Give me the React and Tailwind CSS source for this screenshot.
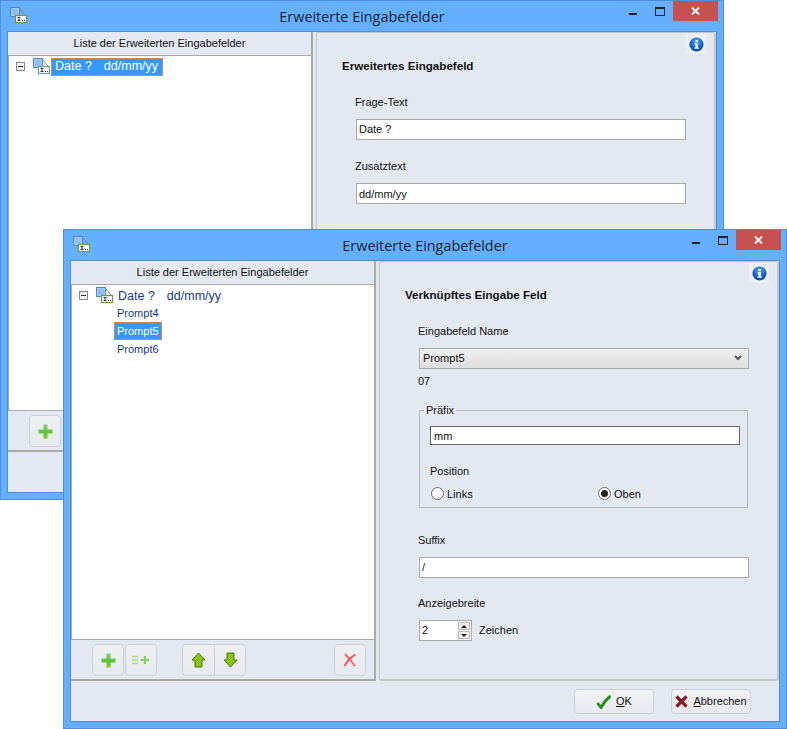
import React from 'react'

function TreeIcon({ edge = '#6f9a3c', className = '' }) {
  return (
    <svg width="17" height="17" viewBox="0 0 17 17" className={className}>
      <rect x="0.5" y="0.5" width="9" height="9" fill="#a5cdf3" stroke="#4f86cc" />
      <rect x="2" y="2" width="6" height="6" fill="#8fc0ee" />
      <path d="M10 2l5 6" stroke="#7d828c" strokeWidth="1" />
      <rect x="5.5" y="8.5" width="11" height="7" fill="#fff" stroke={edge} strokeWidth="1.2" />
      <path d="M7.5 10.5h3M9 10.5v3M7.5 13.5h3M12 13.5h1M14 13.5h1" stroke="#333" strokeWidth="1" />
    </svg>
  )
}

function InfoIcon() {
  return (
    <div className="flex h-5 w-5 items-center justify-center bg-[#eeeff2]">
      <svg width="15" height="15" viewBox="0 0 15 15">
        <defs>
          <radialGradient id="infoBall" cx="50%" cy="30%" r="75%">
            <stop offset="0%" stopColor="#5aa6ef" />
            <stop offset="60%" stopColor="#0f62cc" />
            <stop offset="100%" stopColor="#0a3f96" />
          </radialGradient>
        </defs>
        <circle cx="7.5" cy="7.5" r="7" fill="url(#infoBall)" />
        <rect x="6.5" y="3" width="2.4" height="2" fill="#fff" />
        <path d="M5.5 6.2h3.4v4.4h1v1.2H5.5v-1.2h1V7.4h-1z" fill="#fff" />
      </svg>
    </div>
  )
}

function PlusIcon() {
  return (
    <svg width="15" height="15" viewBox="0 0 15 15">
      <defs>
        <linearGradient id="plusFill" x1="0" y1="0" x2="0" y2="1">
          <stop offset="0%" stopColor="#7fd06a" />
          <stop offset="60%" stopColor="#5fbe3a" />
          <stop offset="100%" stopColor="#78d010" />
        </linearGradient>
      </defs>
      <path d="M5.5 0.5h4v5h5v4h-5v5h-4v-5h-5v-4h5z" fill="url(#plusFill)" />
    </svg>
  )
}

function ListPlusIcon() {
  return (
    <svg width="18" height="10" viewBox="0 0 18 10">
      <path d="M0 1.5h6M0 5h6M0 8.5h6" stroke="#a8dc78" strokeWidth="1.6" />
      <path d="M9 5h8M13 1v8" stroke="#86d060" strokeWidth="2.2" />
    </svg>
  )
}

function ArrowIcon({ down = false }) {
  return (
    <svg width="15" height="16" viewBox="0 0 15 16" className={down ? 'rotate-180' : ''}>
      <path d="M7.5 1L14 8h-3v7H4V8H1z" fill="#8cc40c" stroke="#3f7d08" strokeWidth="1" />
    </svg>
  )
}

function DeleteIcon() {
  return (
    <svg width="14" height="14" viewBox="0 0 14 14">
      <path d="M2 1c3 3 6 7 10 12" stroke="#f2636b" strokeWidth="2" fill="none" />
      <path d="M12.5 1.5C8 4 4 8 1.5 13" stroke="#f4545c" strokeWidth="2" fill="none" />
    </svg>
  )
}

function CheckIcon() {
  return (
    <svg width="15" height="14" viewBox="0 0 15 14">
      <path d="M1.5 8l3.5 4.5C7.5 8 10.5 4 14.5 1" stroke="#1c8c1c" strokeWidth="2.8" fill="none" />
    </svg>
  )
}

function CancelIcon() {
  return (
    <svg width="13" height="13" viewBox="0 0 13 13">
      <path d="M1.5 1.5l10 10M11.5 1.5l-10 10" stroke="#8c1c24" strokeWidth="3.2" />
    </svg>
  )
}

function ToolButton({ children, className = '' }) {
  return (
    <div className={`flex h-[32px] w-[32px] items-center justify-center rounded-[4px] border border-[#ccd0d6] bg-gradient-to-b from-[#eef0f3] to-[#e6e9ee] ${className}`}>
      {children}
    </div>
  )
}

function Field({ value, className = '' }) {
  return (
    <input
      readOnly
      value={value}
      className={`block h-[21px] w-[330px] border border-[#a9abb0] bg-white px-[2px] text-[11px] text-[#111] outline-none ${className}`}
    />
  )
}

function Window({ className = '', tree, tools, form, footer }) {
  return (
    <div className={`absolute flex h-[500px] w-[724px] flex-col border border-[#4f8fd3] bg-[#64b0fe] ${className}`}>
      {/* Title bar */}
      <div className="grid h-[30px] shrink-0 grid-cols-[1fr_auto_1fr] items-start">
        <TreeIcon className="ml-[9px] mt-[6px]" />
        <div className="pt-[6px] text-center font-['Open_Sans',sans-serif] text-[14.4px] leading-[20px] text-[#1c2430]">
          Erweiterte Eingabefelder
        </div>
        <div className="mr-[5px] flex items-start justify-end">
          <div className="mr-[18px] mt-[12px] h-[2px] w-[8px] bg-[#1c2430]" />
          <div className="mr-[8px] mt-[6px] h-[9px] w-[10px] border border-t-[2px] border-[#1c2430]" />
          <div className="flex h-[20px] w-[45px] items-center justify-center bg-[#c75050]">
            <svg width="9" height="8" viewBox="0 0 9 8">
              <path d="M1 0.5l7 7M8 0.5l-7 7" stroke="#fff" strokeWidth="1.8" />
            </svg>
          </div>
        </div>
      </div>

      {/* Client area */}
      <div className="mx-[6px] flex h-[462px] w-[710px] flex-col border border-[#4f8fd3] bg-[#e3e8f1]">
        <div className="flex h-[420px] shrink-0">
          <div className="flex h-full w-[305px] shrink-0 flex-col border-b-2 border-r-2 border-[#a9a9a9]">
            <div className="flex h-[23px] shrink-0 items-center justify-center text-[11px] text-[#111]">
              Liste der Erweiterten Eingabefelder
            </div>
            <div className="h-[356px] shrink-0 border border-r-0 border-[#a9a9a9] bg-white">{tree}</div>
            <div className="flex flex-1 items-start pl-[21px] pt-[4px]">{tools}</div>
          </div>
          <div className="relative ml-[3px] h-full w-[400px] rounded-[3px] border border-r-2 border-b-2 border-[#c4c6ca] bg-[#e3e8f1]">
            <div className="absolute right-[8px] top-[1px]"><InfoIcon /></div>
            {form}
          </div>
        </div>
        <div className="flex flex-1 items-start justify-end pr-[28px] pt-[8px]">{footer}</div>
      </div>
    </div>
  )
}

function TreeRoot({ selected = false, className = '' }) {
  return (
    <div className={`flex items-center pl-[7px] ${className}`}>
      <div className="flex h-[9px] w-[9px] items-center justify-center border border-[#888] bg-[#f2f2f2]">
        <div className="h-px w-[5px] bg-[#333]" />
      </div>
      <TreeIcon edge={selected ? '#5aa0a8' : '#6f9a3c'} className="ml-[8px]" />
      <div
        className={`flex items-center text-[12.5px] leading-[17px] ${
          selected ? 'ml-px h-[18px] w-[112px] border border-[#cf8a4c] bg-[#3399ff] px-[3px] text-white' : 'ml-[5px] pt-px text-[#17388a]'
        }`}
      >
        <span>Date ?</span>
        <span className="ml-[12px]">dd/mm/yy</span>
      </div>
    </div>
  )
}

function PromptRow({ label, selected = false }) {
  return (
    <div className="flex h-[18px] items-center pl-[42px] text-[11px] text-[#17388a]">
      <div className={`flex h-[18px] items-center border px-[2px] ${selected ? 'border-[#cf8a4c] bg-[#3399ff] text-white' : 'border-transparent'}`}>
        {label}
      </div>
    </div>
  )
}

export default function App() {
  return (
    <div className="relative h-[729px] w-[787px] overflow-hidden bg-white font-['Liberation_Sans',sans-serif] text-[11px] text-[#111]">
      {/* Back window */}
      <Window
        className="left-0 top-0"
        tree={<div className="pt-[1px]"><TreeRoot selected className="h-[19px]" /></div>}
        tools={<ToolButton><PlusIcon /></ToolButton>}
        form={
          <div className="pl-[25px] pt-[25px]">
            <div className="text-[11.6px] font-bold leading-[16px]">Erweitertes Eingabefeld</div>
            <div className="ml-[13px] mt-[20px]">Frage-Text</div>
            <Field value="Date ?" className="ml-[14px] mt-[8px]" />
            <div className="ml-[13px] mt-[18px]">Zusatztext</div>
            <Field value="dd/mm/yy" className="ml-[14px] mt-[9px]" />
          </div>
        }
      />

      {/* Front window */}
      <Window
        className="left-[63px] top-[229px]"
        tree={
          <div className="pt-[2px]">
            <TreeRoot className="h-[17px]" />
            <PromptRow label="Prompt4" />
            <PromptRow label="Prompt5" selected />
            <PromptRow label="Prompt6" />
          </div>
        }
        tools={
          <div className="flex">
            <ToolButton><PlusIcon /></ToolButton>
            <ToolButton className="ml-px"><ListPlusIcon /></ToolButton>
            <ToolButton className="ml-[25px] rounded-r-none border-r-0"><ArrowIcon /></ToolButton>
            <ToolButton className="rounded-l-none"><ArrowIcon down /></ToolButton>
            <ToolButton className="ml-[88px]"><DeleteIcon /></ToolButton>
          </div>
        }
        form={
          <div className="pl-[25px] pt-[25px]">
            <div className="text-[11.6px] font-bold leading-[16px]">Verknüpftes Eingabe Feld</div>
            <div className="ml-[13px] mt-[20px]">Eingabefeld Name</div>
            <div className="ml-[14px] mt-[8px] flex h-[21px] w-[330px] items-center justify-between border border-[#a9abb0] bg-gradient-to-b from-[#f0f0f0] to-[#dedede] pl-[3px] pr-[6px]">
              <span>Prompt5</span>
              <svg width="8" height="6" viewBox="0 0 8 6">
                <path d="M1 1l3 3 3-3" stroke="#555" strokeWidth="2" fill="none" />
              </svg>
            </div>
            <div className="ml-[13px] mt-[4px]">07</div>

            <fieldset className="ml-[14px] mt-[15px] h-[104px] w-[329px] border border-[#b9bbc0] pl-[10px] pr-[7px]">
              <legend className="ml-[-6px] px-[2px] leading-[13px]">Präfix</legend>
              <input
                readOnly
                value="mm"
                className="mt-[9px] block h-[19px] w-[310px] border border-[#66686c] bg-white px-[3px] text-[11px] text-[#111] outline-none"
              />
              <div className="mt-[18px]">Position</div>
              <div className="ml-px mt-[6px] flex">
                <div className="flex w-[167px] items-center">
                  <div className="h-[13px] w-[13px] rounded-full border border-[#66686c] bg-white" />
                  <span className="ml-[3px]">Links</span>
                </div>
                <div className="flex items-center">
                  <div className="flex h-[13px] w-[13px] items-center justify-center rounded-full border border-[#66686c] bg-white">
                    <div className="h-[7px] w-[7px] rounded-full bg-[#222]" />
                  </div>
                  <span className="ml-[3px]">Oben</span>
                </div>
              </div>
            </fieldset>

            <div className="ml-[13px] mt-[24px]">Suffix</div>
            <Field value="/" className="ml-[14px] mt-[8px]" />
            <div className="ml-[13px] mt-[17px]">Anzeigebreite</div>
            <div className="ml-[14px] mt-[9px] flex items-center">
              <div className="flex h-[21px] w-[53px] items-center justify-between border border-[#a9abb0] bg-white pl-[2px] pr-[1px]">
                <span>2</span>
                <div className="flex flex-col gap-px">
                  <div className="flex h-[8px] w-[12px] items-center justify-center border border-[#b4b6ba] bg-[#eceef1]">
                    <div className="h-0 w-0 border-x-[3px] border-b-[3px] border-x-transparent border-b-[#222]" />
                  </div>
                  <div className="flex h-[8px] w-[12px] items-center justify-center border border-[#b4b6ba] bg-[#eceef1]">
                    <div className="h-0 w-0 border-x-[3px] border-t-[3px] border-x-transparent border-t-[#222]" />
                  </div>
                </div>
              </div>
              <span className="ml-[7px]">Zeichen</span>
            </div>
          </div>
        }
        footer={
          <div className="flex gap-[17px]">
            <div className="flex h-[25px] w-[80px] items-center justify-center gap-[5px] rounded-[4px] border border-[#ccd0d6] bg-gradient-to-b from-[#f2f3f5] to-[#e6e9ee]">
              <CheckIcon />
              <span><u>O</u>K</span>
            </div>
            <div className="flex h-[25px] w-[80px] items-center justify-center gap-[5px] rounded-[4px] border border-[#ccd0d6] bg-gradient-to-b from-[#f2f3f5] to-[#e6e9ee]">
              <CancelIcon />
              <span><u>A</u>bbrechen</span>
            </div>
          </div>
        }
      />
    </div>
  )
}
